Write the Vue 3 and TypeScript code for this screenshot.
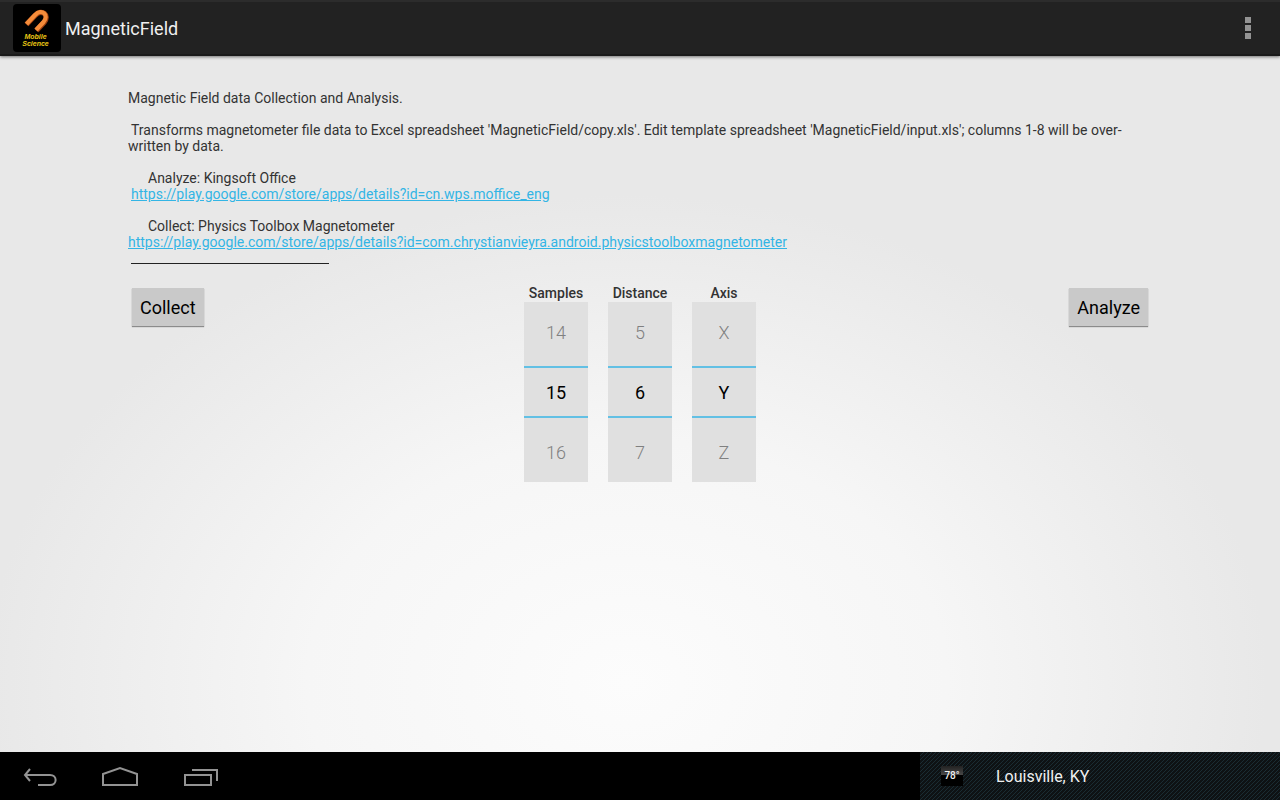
<script setup lang="ts">
import { reactive } from 'vue'

interface Picker {
  id: string
  label: string
  values: string[]
  index: number
}

const range = (from: number, to: number): string[] =>
  Array.from({ length: to - from + 1 }, (_, i) => String(from + i))

const pickers = reactive<Picker[]>([
  { id: 'samples', label: 'Samples', values: range(1, 30), index: 14 },
  { id: 'distance', label: 'Distance', values: range(1, 20), index: 5 },
  { id: 'axis', label: 'Axis', values: ['X', 'Y', 'Z'], index: 1 },
])

const valueAt = (p: Picker, offset: number): string =>
  p.values[(p.index + offset + p.values.length) % p.values.length]

const step = (p: Picker, offset: number): void => {
  p.index = (p.index + offset + p.values.length) % p.values.length
}

const officeUrl = 'https://play.google.com/store/apps/details?id=cn.wps.moffice_eng'
const toolboxUrl =
  'https://play.google.com/store/apps/details?id=com.chrystianvieyra.android.physicstoolboxmagnetometer'
</script>

<template>
  <div class="screen">
    <header class="action-bar">
      <svg class="logo" viewBox="0 0 48 48" width="48" height="48" aria-hidden="true">
        <rect width="48" height="48" rx="4" fill="#000" />
        <path d="M13.500 20.500 L22 11.500 C29 4 37 11.500 31 18.500 L23.500 26.500" fill="none" stroke="#9c3f10" stroke-width="5.400" />
        <path d="M13.500 20 L22 11 C29 4 36.500 11 30.500 18 L23 26" fill="none" stroke="#f58c3a" stroke-width="4.200" />
        <text x="22.500" y="35" class="logo-text" text-anchor="middle">Mobile</text>
        <text x="22.500" y="42" class="logo-text" text-anchor="middle">Science</text>
      </svg>
      <h1>MagneticField</h1>
      <button class="overflow" type="button" aria-label="More options">
        <span></span><span></span><span></span>
      </button>
    </header>

    <main class="content">
      <section class="intro">
        <p>Magnetic Field data Collection and Analysis.</p>
        <p><span class="lead">Transforms magnetometer file data to Excel spreadsheet 'MagneticField/copy.xls'. Edit template spreadsheet 'MagneticField/input.xls'; columns 1-8 will be over-</span><br />written by data.</p>
        <p><span class="caption">Analyze: Kingsoft Office</span><br /><a class="lead" :href="officeUrl">{{ officeUrl }}</a></p>
        <p><span class="caption">Collect: Physics Toolbox Magnetometer</span><br /><a :href="toolboxUrl">{{ toolboxUrl }}</a></p>
        <hr />
      </section>

      <section class="controls">
        <button class="action" type="button">Collect</button>
        <div class="pickers">
          <div v-for="p in pickers" :key="p.id" class="picker">
            <label :for="p.id">{{ p.label }}</label>
            <div class="wheel">
              <button class="previous" type="button" @click="step(p, -1)">{{ valueAt(p, -1) }}</button>
              <input :id="p.id" type="text" :value="valueAt(p, 0)" readonly />
              <button class="next" type="button" @click="step(p, 1)">{{ valueAt(p, 1) }}</button>
            </div>
          </div>
        </div>
        <button class="action" type="button">Analyze</button>
      </section>
    </main>

    <footer class="system-bar">
      <nav>
        <button type="button" aria-label="Back">
          <svg viewBox="0 0 80 48" width="80" height="48">
            <path d="M30 17 L25 23 L30 29 M25 23 H50 C57.500 23 57.500 33 50 33 H38" />
          </svg>
        </button>
        <button type="button" aria-label="Home">
          <svg viewBox="0 0 80 48" width="80" height="48">
            <path d="M23 33 V22 L40 16 L57 22 V33 Z" />
          </svg>
        </button>
        <button type="button" aria-label="Recent apps">
          <svg viewBox="0 0 80 48" width="80" height="48">
            <path d="M25 23 H51 V33 H25 Z M32 18 H57 V29" />
          </svg>
        </button>
      </nav>
      <div class="notice">
        <span class="temperature">78°</span>
        <span>Louisville, KY</span>
      </div>
    </footer>
  </div>
</template>

<style>
body {
  margin: 0;
}
</style>

<style scoped>
.screen {
  display: flex;
  flex-direction: column;
  min-height: 100vh;
  font-family: Roboto, "Liberation Sans", sans-serif;
  color: #333;
}

button,
input {
  box-sizing: border-box;
  margin: 0;
  padding: 0;
  border: 0;
  background: none;
  color: inherit;
  font: inherit;
}

.action-bar {
  position: relative;
  display: flex;
  align-items: center;
  box-sizing: border-box;
  height: 56px;
  padding: 0 16px 0 13px;
  border-top: 2px solid #2c2c2c;
  border-bottom: 2px solid #1a1a1a;
  background: #222;
  box-shadow: 0 1px 3px rgba(0, 0, 0, 0.5);
}

.logo-text {
  fill: #ecc815;
  font-family: "Liberation Sans", sans-serif;
  font-size: 7px;
  font-style: italic;
  font-weight: 700;
}

h1 {
  flex: 1;
  margin: 0 0 0 4px;
  color: #f0f0f0;
  font-size: 18px;
  font-weight: 400;
}

.overflow {
  display: flex;
  flex-direction: column;
  align-items: center;
  gap: 2px;
  width: 32px;
}

.overflow span {
  width: 6px;
  height: 6px;
  background: #939393;
}

.content {
  flex: 1;
  padding: 34px 10% 0;
  background: radial-gradient(ellipse 50% 70% at 49% 90%, #fcfcfc 0%, #f6f6f6 50%, #e8e8e8 100%);
}

.intro {
  font-size: 14px;
  line-height: 16px;
}

.intro p {
  margin: 0 0 16px;
}

.lead {
  margin-left: 3px;
}

.caption {
  margin-left: 20px;
}

.intro a {
  color: #33b5e5;
  text-decoration: underline;
}

.intro hr {
  width: 198px;
  height: 1px;
  margin: -3px 0 0 3px;
  border: 0;
  background: #222;
}

.controls {
  display: grid;
  grid-template-columns: 1fr auto 1fr;
  align-items: start;
  padding: 21px 4px 0;
}

.action {
  justify-self: start;
  height: 38px;
  margin-top: 3px;
  padding: 0 8px;
  background: #c9c9c9;
  box-shadow: 0 1px 1px rgba(0, 0, 0, 0.4);
  color: #000;
  font-size: 18px;
}

.action:last-child {
  justify-self: end;
}

.pickers {
  display: flex;
  gap: 20px;
}

.picker {
  display: flex;
  flex-direction: column;
  width: 64px;
}

.picker label {
  padding-bottom: 1px;
  font-size: 14px;
  font-weight: 500;
  line-height: 16px;
  text-align: center;
}

.wheel {
  display: flex;
  flex-direction: column;
  background: #e0e0e0;
  font-size: 18px;
  text-align: center;
}

.wheel button {
  height: 64px;
  color: #808080;
  font-weight: 300;
}

.wheel .previous {
  padding-bottom: 4px;
}

.wheel .next {
  padding-top: 4px;
}

.wheel input {
  width: 100%;
  height: 52px;
  border-top: 2px solid #62c0e4;
  border-bottom: 2px solid #62c0e4;
  color: #000;
  text-align: center;
}

.system-bar {
  display: flex;
  justify-content: space-between;
  height: 48px;
  background: #000;
}

.system-bar nav {
  display: flex;
}

.system-bar nav button {
  width: 80px;
  height: 48px;
}

.system-bar svg {
  display: block;
  fill: none;
  stroke: #939393;
  stroke-width: 2;
}

.notice {
  display: flex;
  align-items: center;
  gap: 33px;
  box-sizing: border-box;
  width: 360px;
  padding-left: 21px;
  background: linear-gradient(135deg, #0e1214 38%, #1a2c33 38% 62%, #0e1214 62%) 0 0 / 4px 4px;
  color: #f0f0f0;
  font-size: 16px;
}

.temperature {
  width: 22px;
  height: 20px;
  background: linear-gradient(#222, #484848 45%, #000 45%);
  font-size: 10px;
  font-weight: 500;
  line-height: 20px;
  text-align: center;
}
</style>
